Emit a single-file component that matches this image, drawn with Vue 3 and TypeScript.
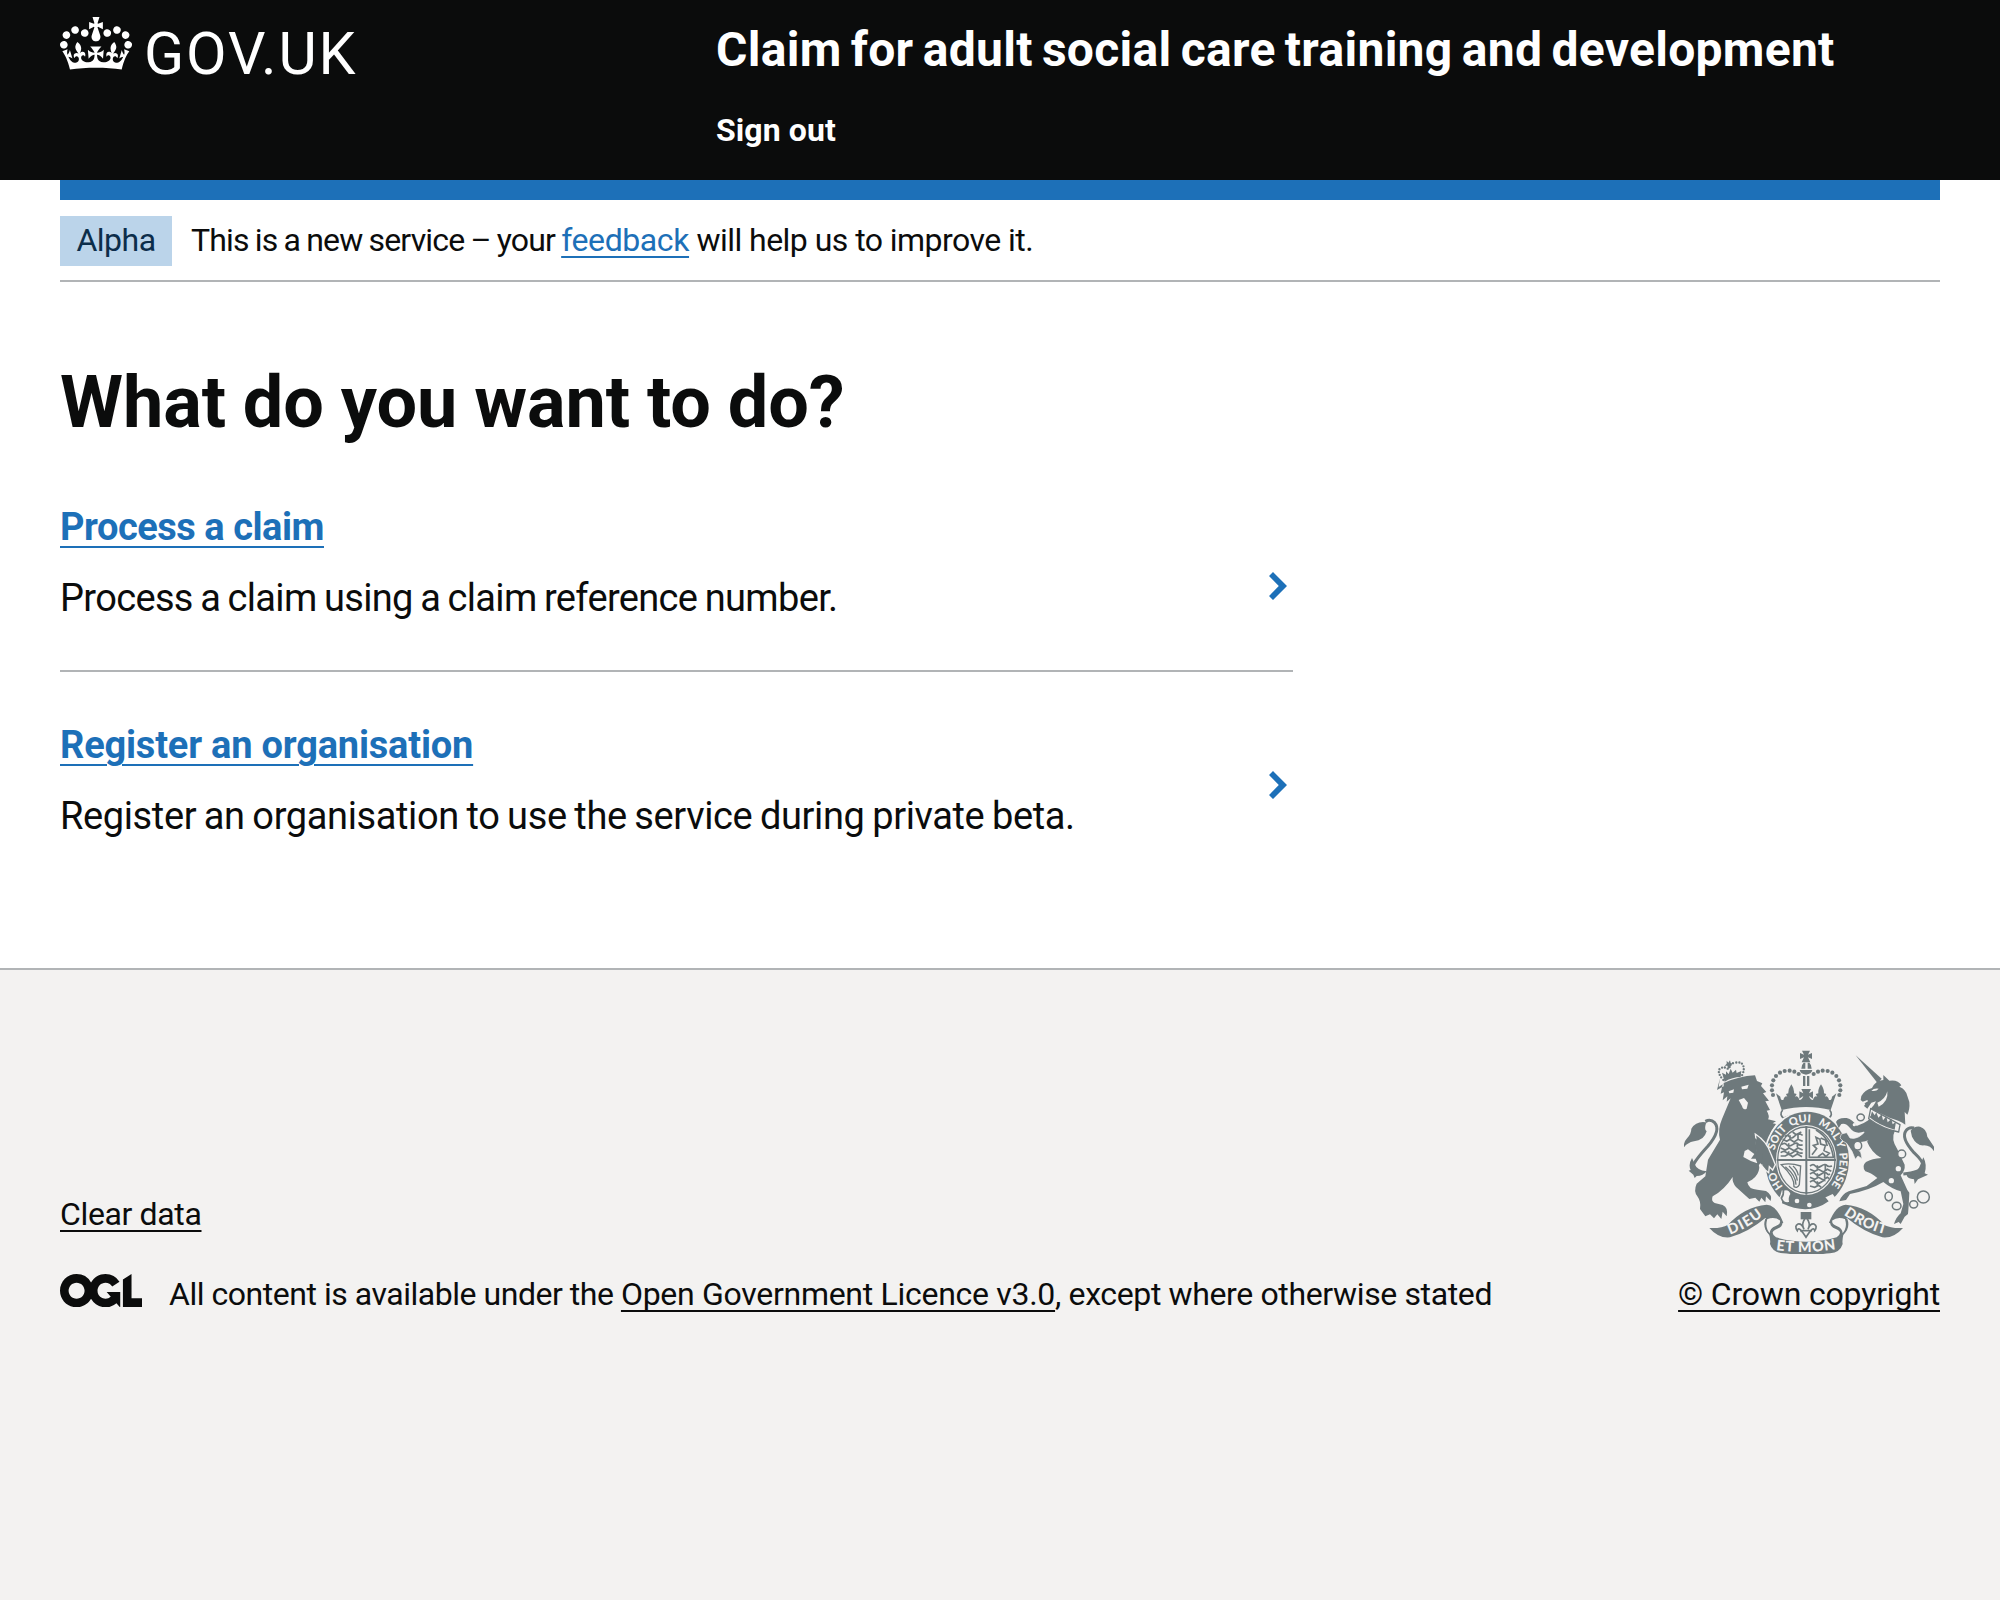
<script setup lang="ts">
interface Task {
  title: string
  description: string
  titleSpacing: string
  descriptionSpacing: string
}

const tasks: Task[] = [
  {
    title: 'Process a claim',
    description: 'Process a claim using a claim reference number.',
    titleSpacing: '-0.47px',
    descriptionSpacing: '-0.66px',
  },
  {
    title: 'Register an organisation',
    description: 'Register an organisation to use the service during private beta.',
    titleSpacing: '-0.2px',
    descriptionSpacing: '-0.38px',
  },
]

const leftBeads: [number, number][] = [
  [309, 163], [306, 149], [306, 134], [310, 119], [318, 106], [330, 96],
  [344, 91], [359, 90], [373, 93], [386, 100],
]
const beads = leftBeads.flatMap(([x, y]) => [[x, y], [817 - x, y]])

const chain: [number, number, number, number][] = [
  [572, 230, 11, 10], [563, 315, 12, 13], [695, 340, 12, 12], [656, 467, 11, 13],
  [680, 496, 13, 11], [731, 491, 12, 11], [760, 469, 18, 18],
]
</script>

<template>
  <div class="page">
    <header class="header">
      <div class="container header-row">
        <a class="logo">
          <svg class="logo-crown" viewBox="0 0 132 97" width="72" height="53">
            <path fill="currentColor" fill-rule="evenodd" d="M25 30.2c3.5 1.5 7.7-.2 9.1-3.7 1.5-3.6-.2-7.8-3.9-9.2-3.6-1.4-7.6.3-9.1 3.9-1.4 3.5.3 7.5 3.9 9zM9 39.5c3.6 1.5 7.8-.2 9.2-3.7 1.5-3.6-.2-7.8-3.9-9.1-3.6-1.5-7.6.2-9.1 3.8-1.4 3.5.3 7.5 3.8 9zM4.4 57.2c3.5 1.5 7.7-.2 9.1-3.8 1.5-3.6-.2-7.7-3.9-9.1-3.5-1.5-7.6.3-9.1 3.8-1.4 3.5.3 7.6 3.9 9.1zm38.3-21.4c3.5 1.5 7.7-.2 9.1-3.8 1.5-3.6-.2-7.7-3.9-9.1-3.6-1.5-7.6.3-9.1 3.8-1.3 3.6.4 7.7 3.9 9.1zm64.4-5.6c-3.6 1.5-7.8-.2-9.1-3.7-1.5-3.6.2-7.8 3.8-9.2 3.6-1.4 7.7.3 9.2 3.9 1.3 3.5-.4 7.5-3.9 9zm15.9 9.3c-3.6 1.5-7.7-.2-9.1-3.7-1.5-3.6.2-7.8 3.7-9.1 3.6-1.5 7.7.2 9.2 3.8 1.5 3.5-.3 7.5-3.8 9zm4.7 17.7c-3.6 1.5-7.8-.2-9.2-3.8-1.5-3.6.2-7.7 3.9-9.1 3.6-1.5 7.7.3 9.2 3.8 1.3 3.5-.4 7.6-3.9 9.1zM89.3 35.8c-3.6 1.5-7.8-.2-9.2-3.8-1.4-3.6.2-7.7 3.9-9.1 3.6-1.5 7.7.3 9.2 3.8 1.4 3.6-.3 7.7-3.9 9.1zM69.7 17.7l8.9 4.7V9.3l-8.9 2.8c-.2-.3-.5-.6-.9-.9L72.4 0H59.6l3.5 11.2c-.3.3-.6.5-.9.9l-8.8-2.8v13.1l8.8-4.7c.3.3.6.7.9.9l-5 15.4v.1c-.2.8-.4 1.6-.4 2.4 0 4.1 3.1 7.5 7 8.1h.2c.3 0 .7.1 1 .1.4 0 .7 0 1-.1h.2c4-.6 7.1-4.1 7.1-8.1 0-.8-.1-1.7-.4-2.4V34l-5.1-15.4c.4-.2.7-.6 1-.9zM66 92.8c16.9 0 32.8 1.1 47.1 3.2 4-16.9 8.9-26.7 14-33.5l-9.6-3.4c1 4.9 1.1 7.2 0 10.2-1.5-1.4-3-4.3-4.2-8.7L108.6 76c2.8-2 5-3.2 7.5-3.3-4.4 9.4-10 11.9-13.6 11.2-4.3-.8-6.3-4.6-5.6-7.9 1-4.7 5.7-5.9 8-.5 4.3-8.7-3-11.4-7.6-8.8 7.1-7.2 7.9-13.5 2.1-21.1-8 6.1-8.1 12.3-4.5 20.8-4.7-5.4-12.1-2.5-9.5 6.2 3.4-5.2 7.9-2 7.2 3.1-.6 4.3-6.4 7.8-13.5 7.2-10.3-.9-10.9-8-11.2-13.8 2.5-.5 7.1 1.8 11 7.3L80.2 60c-4.1 4.4-8 5.3-12.3 5.4 1.4-4.4 8-11.6 8-11.6H55.5s6.4 7.2 7.9 11.6c-4.2-.1-8-1-12.3-5.4l1.4 16.4c3.9-5.5 8.5-7.7 10.9-7.3-.3 5.8-.9 12.8-11.1 13.8-7.2.6-12.9-2.9-13.5-7.2-.7-5 3.8-8.3 7.1-3.1 2.7-8.7-4.6-11.6-9.4-6.2 3.7-8.5 3.6-14.7-4.6-20.8-5.8 7.6-5 13.9 2.2 21.1-4.7-2.6-11.9.1-7.7 8.8 2.3-5.5 7.1-4.2 8.1.5.7 3.3-1.3 7.1-5.7 7.9-3.5.7-9-1.8-13.5-11.2 2.5.1 4.7 1.3 7.5 3.3l-4.7-15.4c-1.2 4.4-2.7 7.2-4.3 8.7-1.1-3-.9-5.3 0-10.2l-9.5 3.4c5 6.9 9.9 16.7 14 33.5 14.8-2.1 30.8-3.2 47.7-3.2z" />
          </svg>
          <span class="logo-text">GOV.UK</span>
        </a>
        <div class="header-content">
          <a class="service-name">Claim for adult social care training and development</a>
          <nav><a class="sign-out">Sign out</a></nav>
        </div>
      </div>
    </header>

    <div class="container">
      <div class="bar"></div>
      <div class="phase">
        <strong class="tag">Alpha</strong>
        <p class="phase-text"><span class="phase-lead">This is a new service – your </span><a class="link feedback">feedback</a><span class="phase-tail"> will help us to improve it.</span></p>
      </div>

      <main class="main">
        <h1 class="heading">What do you want to do?</h1>
        <ul class="tasks">
          <li v-for="task in tasks" :key="task.title" class="task">
            <div class="task-body">
              <h2 class="task-title"><a class="link" :style="{ letterSpacing: task.titleSpacing }">{{ task.title }}</a></h2>
              <p class="task-text" :style="{ letterSpacing: task.descriptionSpacing }">{{ task.description }}</p>
            </div>
            <svg class="chevron" viewBox="0 0 18 28" width="18" height="28">
              <path d="M4 0 18 14 4 28 0 24 9.8 14 0 4z" fill="#1d70b8" />
            </svg>
          </li>
        </ul>
      </main>
    </div>

    <footer class="footer">
      <div class="container footer-row">
        <div class="footer-main">
          <a class="footer-link clear">Clear data</a>
          <div class="licence">
            <svg class="ogl" viewBox="0 0 483.2 195.7" width="82" height="33.4">
              <path fill="currentColor" d="M421.5 142.8V.1l-50.7 32.3v161.1h112.4v-50.7zm-122.3-9.6A47.12 47.12 0 0 1 221 97.8c0-26 21.1-47.1 47.1-47.1 16.7 0 31.4 8.7 39.7 21.8l42.7-27.2A97.63 97.63 0 0 0 268.1 0c-36.5 0-68.3 20.1-85.1 49.7A98 98 0 0 0 97.8 0C43.9 0 0 43.9 0 97.8s43.9 97.8 97.8 97.8c36.5 0 68.3-20.1 85.1-49.7a97.76 97.76 0 0 0 149.6 25.4l19.4 22.2h3v-87.8h-80l24.3 27.5zM97.8 145c-26 0-47.1-21.1-47.1-47.1s21.1-47.1 47.1-47.1 47.1 21.1 47.1 47.1S123.8 145 97.8 145" />
            </svg>
            <span class="licence-text"><span class="l1">All content is available under the </span><a class="footer-link l2">Open Government Licence v3.0</a><span class="l3">, except where otherwise stated</span></span>
          </div>
        </div>
        <div class="copyright">
          <svg class="crest" viewBox="42 28 750 612" width="250" height="204">
            <defs>
              <path id="garter" d="M410 471A99 113 0 0 1 410 245A99 113 0 0 1 410 471" />
              <path id="ribbon-left" d="M180 582Q235 562 286 520" />
              <path id="ribbon-mid" d="M318 628Q409 641 502 625" />
              <path id="ribbon-right" d="M521 522Q580 565 650 582" />
              <path id="crown-half" d="M409.5 199Q370 199 335 208L318 158 331 168Q332 180 340 178 344 164 352 168L348 160 355 158Q354 146 364 131 374 146 372 158L380 160 375 168Q384 164 388 178 396 178 400 166L388 174V152L400 158 394 145H409.5z" />
            </defs>
            <g fill="#6e797c">
              <!-- imperial crown -->
              <path d="M396 30h24l-6 12 12-5v18l-12-5 7 15h-26l7-15-12 5v-18l12 5z" />
              <path d="M401 66h5v18h-12q0-12 7-18zM418 66h-5v18h12q0-12-7-18zM389 88h38q-2 12-19 14-17-2-19-14zM399 106h7v30h-7zM411 106h7v30h-7z" />
              <circle v-for="([x, y], i) in beads" :key="i" :cx="x" :cy="y" r="6.2" />
              <use href="#crown-half" />
              <use href="#crown-half" transform="matrix(-1 0 0 1 817 0)" />
              <path d="M338 208q-12 14 4 26M479 208q12 14-4 26M342 232q66-30 132 0" fill="none" stroke="#6e797c" stroke-width="5" />

              <!-- lion -->
              <path d="M160 118Q142 98 148 86 160 74 176 86 178 68 196 66 216 62 220 76 224 88 216 104" fill="none" stroke="#6e797c" stroke-width="7" stroke-linecap="round" stroke-dasharray="0 9" />
              <path d="M156 96l12 6 0-10 8 8 6-16 6 12 10-9 2 10 14-6-2 18q-24 0-48 14zM170 60l5 6 5-7 2 8 6 2-6 4 0 8-8 2-2-8-8 0 6-6z" />
              <path d="M141 148l20-11 0-10q44-20 94-23l6 17 16 7-4 8 16 18-10 4 18 22-11 2 14 26-10 2q10 16 4 26l24 6-10 6 10 2q-16 20-22 42l20 22 14 54-9 8-7-10-2 12-8-4-4 8-11-12-6 14-10-20-8 12-8-22-14 0 10-14-19-14-10 5-4 18q22 14 46 20l2 12q-2 22-22 36l-14 8q4 22 30 22l26 4q20 12 14 30l-14-14-2 18-12-14-6 12-12-12-18 4-40-36q-12-14-10-30-26 40-60 58-6 14 6 20l24 6q18 8 12 34l-12-14-4 22-12-14-10 12-12-12-14 6-16-22q4-22-8-38-12-16-2-38l26-22 8-50 36-60q-8-30 6-62l26-62-12 10 2-16-14 12 4-24-10 4 6-28-12 8 4-26z" />
              <path d="M176 152l16-6-2 10-12 2zM214 138l22-6-4 12-16 2zM206 178l16-6 12 14-4 18q-10 6-14-8z" fill="#f3f2f1" />
              <path d="M96 396q-34-2-26-22 4-14 44-58 40-48 20-70-12-12-28-4" fill="none" stroke="#6e797c" stroke-width="9" />
              <path d="M114 246q-34-8-50 18 0 16-14 30-10 10-8 26 10-14 30-18 30-2 38-30-8-4-2-24zM66 352q-12 20-4 36l-6 2 14 12 4 10 6-6q20 0 30-14-30-4-34-18z" />

              <!-- unicorn -->
              <path d="M557 44l78 70-12 14z" />
              <path d="M640 103L658 120Q684 116 694 134L688 138Q708 146 712 166L718 184Q720 206 712 222L704 214 706 252Q690 240 660 232L602 204Q612 196 618 182L604 186 592 204 582 196 586 190 572 178 574 166Q584 148 606 142 616 120 640 118z" />
              <path d="M604 150q8-8 22-6-8 10-22 6zM622 186q24-10 30-34 4 32-26 46zM576 184l16-6 2 4-14 8z" fill="#f3f2f1" />
              <path d="M598 234Q622 256 674 272Q662 296 682 326L704 372Q706 390 692 404L712 448 718 456Q716 500 714 520L704 528 692 550 686 544 672 550Q678 530 692 518L700 490 692 452Q664 444 640 424 600 448 540 460L528 478 508 482Q514 462 536 452L590 436 622 412Q602 396 586 392 574 376 588 364 606 354 634 352 604 336 590 300L580 262Q592 250 598 234z" />
              <path d="M602 204l88 48-4 22q-50-10-90-40z" fill="#f3f2f1" stroke="#6e797c" stroke-width="4" />
              <path d="M602 226l4-14 8 12 5-9 6 16 10-10 4 18 10-12 4 18 11-10 4 16 10-8-4 24q-46-12-76-38z" />
              <path d="M700 400q52-4 58-24 4-12-26-40-40-44-24-66 8-12 24-8" fill="none" stroke="#6e797c" stroke-width="9" />
              <path d="M722 270q10-14 28-12 20 6 22 30l20 30v14q-10-18-30-18-22 2-36-26zM760 350q12 22 4 48l10 4-30 14-10 14-2-14q-20-2-22-12 30-8 38-24z" />

              <!-- garter and shield -->
              <ellipse cx="411" cy="359" rx="131" ry="151" fill="#f3f2f1" />
              <ellipse cx="411" cy="359" rx="126" ry="146" />
              <ellipse cx="409" cy="358" rx="91" ry="105" fill="#f3f2f1" />
              <ellipse cx="409" cy="358" rx="86" ry="99" fill="none" stroke="#6e797c" stroke-width="4" />
              <path d="M406 256h6v206h-6zM320 355h178v6H320z" />
              <g fill="none" stroke="#6e797c" stroke-width="5">
                <path d="M344 288q8-8 14 0t14 0 14-8 12 4M338 296l12 6 10-6 12 8 12-8 14 6M334 312q10-8 16 0t18 0 16-2 14 2M332 322l14 6 12-6 14 8 12-8 14 6M332 336q10-8 18 0t18 0 16-2 14 2M332 346h14l10-6 12 8 14-8 14 8M368 274l10 8 16-8M360 284v12M384 280v14M356 308v14M382 308v12M356 332v12M382 332v12" />
                <path d="M420 376q10-8 16 0t18 0 16-2 16 2M420 386l14 6 12-6 14 8 12-8 12 6M420 400q10-8 16 0t18 0 16-2 10 2M420 410l14 6 12-6 14 8 12-8 6 4M420 424q10-8 16 0t18 0 10-2M420 436l14 4 12-6 8 6M442 374v14M466 374v14M442 398v14M464 398v14M442 422v14" />
                <path d="M418 266v84h72q-8-56-52-82M426 342l14-18-10-10 14-4-6-20 12 6 2 14 14 4-4 16 16 8-10 10-10-10-14 10M452 292l14 6 6 18" />
                <path d="M334 372q28-6 58 4l-4 56q-6 12-16 6 2-30-38-66zM346 378q32 26 32 54M357 376q22 20 25 44M369 376q12 10 16 28" stroke-width="4" />
              </g>
              <path d="M336 448q60 60 152 12l10 14q-70 66-172 8z" fill="#f3f2f1" />
              <path d="M340 452q16-12 32 4 28 20 66 14l22-8 16 20q-60 44-140 6z" />
              <path d="M340 448q18-6 24 12-8 10-4 26-20 6-26-14 8-10 6-24z" fill="#f3f2f1" stroke="#6e797c" stroke-width="5" />
              <circle cx="381" cy="481" r="7" fill="#f3f2f1" />
              <circle cx="418" cy="493" r="7" fill="#f3f2f1" />
              <g class="motto" fill="#f3f2f1" font-size="33">
                <text><textPath href="#garter" startOffset="80">HO</textPath></text>
                <text><textPath href="#garter" startOffset="195">SOIT</textPath></text>
                <text><textPath href="#garter" startOffset="283">QUI</textPath></text>
                <text><textPath href="#garter" startOffset="367">MAL</textPath></text>
                <text><textPath href="#garter" startOffset="444">Y</textPath></text>
                <text><textPath href="#garter" startOffset="478">PENSE</textPath></text>
              </g>

              <!-- supporters' forelegs, resting on the garter -->
              <path d="M256 280Q290 302 302 338L316 372 308 388 298 378 296 396 286 388 276 376 262 330z" stroke="#f3f2f1" stroke-width="4" />
              <path d="M254 292L280 310 276 372 262 360z" />
              <path d="M604 262Q560 290 540 262 528 246 514 250L506 262 498 244Q504 230 530 232 548 236 560 256 580 250 600 236z" />
              <path d="M594 262Q566 300 540 292L530 276 514 280 510 292Q520 304 530 308L546 332 556 356 564 346 576 354 572 334 556 322 558 306Q586 306 602 296z" stroke="#f3f2f1" stroke-width="2" />
              <path d="M578 262l40-10 0 60-22-8z" />
              <ellipse v-for="([x, y, rx, ry], i) in chain" :key="'c' + i" :cx="x" :cy="y" :rx="rx" :ry="ry" fill="#f3f2f1" stroke="#6e797c" stroke-width="4.5" />
              <circle cx="685" cy="384" r="8" fill="#f3f2f1" />
              <circle cx="664" cy="420" r="8" fill="#f3f2f1" />
              <circle cx="553" cy="252" r="5" fill="#f3f2f1" />

              <!-- fleur-de-lis -->
              <path d="M392 514h32v22h-32z" />
              <path d="M408 530q16 18 6 36 6-18 18-16 12 6 2 20-2-8-8-4-6 6-10 12l-8 12-8-12q-4-6-10-12-6-4-8 4-10-14 2-20 12-2 18 16-10-18 6-36z" fill="#f3f2f1" stroke="#6e797c" stroke-width="5" />
              <path d="M390 570h36" stroke="#6e797c" stroke-width="5" />

              <!-- ribbons -->
              <path d="M118 562q36 2 56-10 50-54 116-60 30 2 50 54-8 4-22 6-10-20-32-20-50 42-106 58-34 4-62-28z" />
              <path d="M699 562q-36 2-56-10-50-54-116-60-30 2-50 54 8 4 22 6 10-20 32-20 50 42 106 58 34 4 62-28z" />
              <path d="M286 534q-10 28 12 48 4 18 2 28 8 26 40 28 70 8 140 0 30-2 38-28-2-10 2-28 22-20 12-48-24-10-46 0-14 20 10 30 26 10 4 26-90 26-182 0-22-16 4-26 24-10 10-30-22-10-46 0z" />
              <path d="M290 534q24-10 42 4 4 14-14 20-20 8-16 26-22-20-12-50zM527 534q-24-10-42 4-4 14 14 20 20 8 16 26 22-20 12-50z" fill="#f3f2f1" stroke="#6e797c" stroke-width="4.5" />
              <g class="motto" fill="#f3f2f1" font-size="43">
                <text><textPath href="#ribbon-left" textLength="114">DIEU</textPath></text>
                <text><textPath href="#ribbon-mid" textLength="180">ET MON</textPath></text>
                <text><textPath href="#ribbon-right" textLength="138">DROIT</textPath></text>
              </g>
            </g>
          </svg>
          <a class="footer-link copy">© Crown copyright</a>
        </div>
      </div>
    </footer>
  </div>
</template>

<style>
body {
  margin: 0;
}
</style>

<style scoped>
.page {
  min-height: 1600px;
  display: flex;
  flex-direction: column;
  background: #fff;
  color: #0b0c0c;
  font-family: Roboto, "Liberation Sans", sans-serif;
  font-size: 32px;
}
.container {
  margin: 0 60px;
}
.header {
  background: #0b0c0c;
  color: #fff;
  height: 180px;
}
.header-row {
  display: flex;
}
.logo {
  width: 656px;
  display: flex;
  padding-top: 17px;
  box-sizing: border-box;
}
.logo-crown {
  display: block;
  flex: none;
}
.logo-text {
  font-size: 59px;
  line-height: 74px;
  font-weight: 400;
  letter-spacing: 1.9px;
  margin-left: 12px;
}
.header-content {
  padding-top: 20px;
}
.service-name {
  display: block;
  font-size: 48px;
  line-height: 60px;
  font-weight: 700;
  letter-spacing: 0.29px;
  word-spacing: -3px;
  white-space: nowrap;
}
.sign-out {
  display: block;
  margin-top: 25px;
  line-height: 50px;
  font-weight: 700;
  letter-spacing: 0.1px;
}
.bar {
  height: 20px;
  background: #1d70b8;
}
.phase {
  display: flex;
  padding: 16px 0 14px;
  border-bottom: 2px solid #b1b4b6;
}
.tag {
  width: 112px;
  height: 50px;
  box-sizing: border-box;
  line-height: 48px;
  text-align: center;
  font-weight: 400;
  letter-spacing: -0.5px;
  color: #0c2d4a;
  background: #bbd4ea;
}
.phase-text {
  margin: 0 0 0 19px;
  line-height: 48px;
  white-space: pre;
}
.phase-lead {
  letter-spacing: -0.83px;
  word-spacing: -1px;
}
.feedback {
  letter-spacing: -0.4px;
}
.phase-tail {
  letter-spacing: -0.54px;
}
.link {
  color: #1d70b8;
  text-decoration: underline;
  text-decoration-thickness: 2px;
  text-underline-offset: 5px;
}
.main {
  padding: 81px 0 70px;
}
.heading {
  margin: 0 0 59px;
  font-size: 72px;
  line-height: 80px;
  font-weight: 700;
  letter-spacing: -0.05px;
  word-spacing: -1px;
}
.tasks {
  list-style: none;
  margin: 0;
  padding: 0;
  width: 1233px;
}
.task {
  display: flex;
  align-items: center;
  justify-content: space-between;
  padding-right: 6px;
}
.task-body {
  padding: 48px 0 57px;
}
.task:first-child {
  border-bottom: 2px solid #b1b4b6;
}
.task:first-child .task-body {
  padding: 0 0 47px;
}
.task-title {
  margin: 0 0 21px;
  font-size: 38px;
  line-height: 50px;
  font-weight: 700;
}
.task-title .link {
  text-underline-offset: 6px;
}
.task-text {
  margin: 0;
  font-size: 38px;
  line-height: 50px;
  word-spacing: -1.4px;
  white-space: nowrap;
}
.chevron {
  display: block;
}
.footer {
  flex: 1;
  border-top: 2px solid #b1b4b6;
  background: #f3f2f1;
}
.footer-row {
  display: flex;
  justify-content: space-between;
  align-items: flex-end;
  padding-top: 80px;
  line-height: 40px;
}
.footer-link {
  text-decoration: underline;
  text-decoration-thickness: 2px;
  text-underline-offset: 5px;
  text-decoration-skip-ink: none;
}
.footer-main {
  display: flex;
  flex-direction: column;
  align-items: flex-start;
  gap: 40px;
}
.clear {
  letter-spacing: -0.36px;
}
.licence {
  display: flex;
}
.ogl {
  display: block;
}
.licence-text {
  margin-left: 27px;
  white-space: pre;
}
.l1 {
  letter-spacing: -0.47px;
}
.l2 {
  letter-spacing: -0.29px;
}
.l3 {
  letter-spacing: -0.37px;
}
.copyright {
  display: flex;
  flex-direction: column;
  align-items: center;
  gap: 20px;
}
.crest {
  display: block;
}
.motto {
  font-family: Lato, sans-serif;
  font-weight: 900;
}
.copy {
  letter-spacing: -0.18px;
  white-space: nowrap;
}
</style>
